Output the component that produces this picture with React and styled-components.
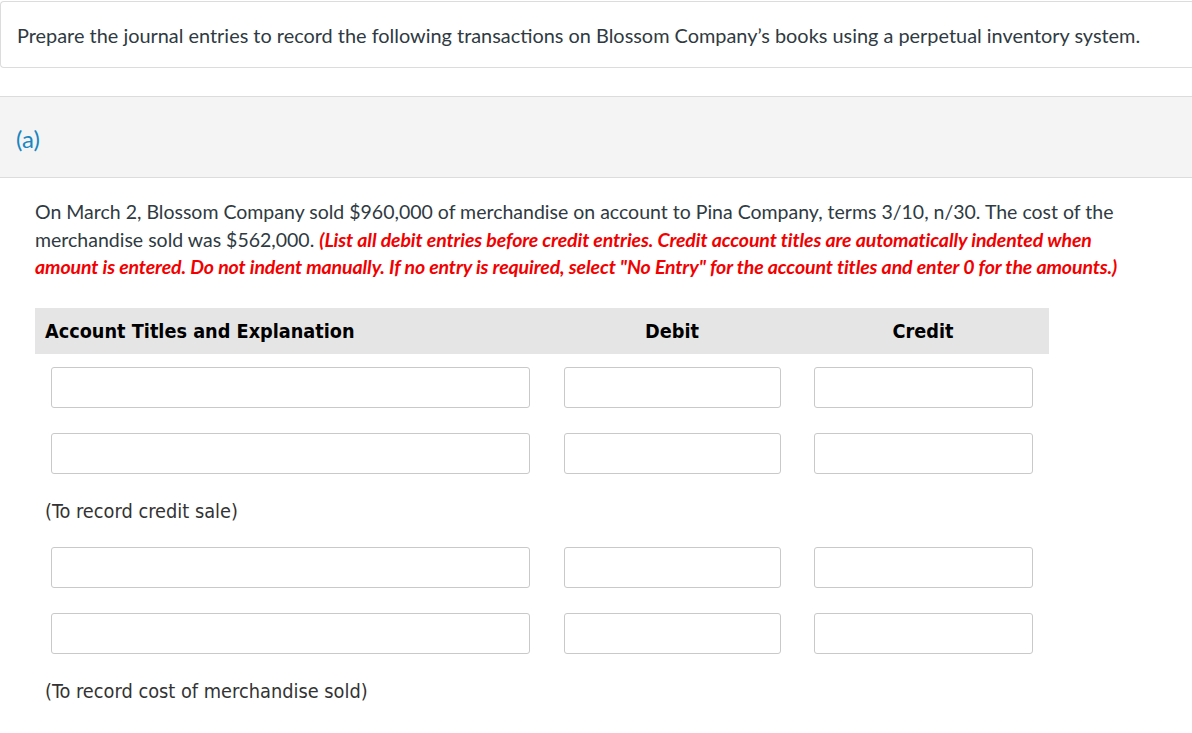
import React from "react";
import styled, { createGlobalStyle } from "styled-components";

const Global = createGlobalStyle`
  html, body { margin: 0; padding: 0; background: #fff; }
  body { font-family: Lato, "Open Sans", sans-serif; color: #333; }
  * { box-sizing: border-box; }
`;

const Page = styled.div`
  width: 1192px;
  padding-top: 1px;
`;

const IntroBox = styled.div`
  height: 67px;
  border: 1px solid #dcdcdc;
  border-right: none;
  border-radius: 4px 0 0 4px;
  display: flex;
  align-items: center;
  padding: 0 0 0 16px;
  font-size: 19.9px;
  color: #2f3a42;
  white-space: nowrap;
`;

const PartBand = styled.div`
  margin-top: 28px;
  height: 82px;
  background: #f4f4f4;
  border-top: 1px solid #dcdcdc;
  border-bottom: 1px solid #dcdcdc;
  display: flex;
  align-items: center;
  padding: 2px 0 0 16px;
  font-size: 24px;
  color: #1a86c0;
`;

const Question = styled.p`
  margin: 20px 0 0 35px;
  width: 1140px;
  font-size: 19.5px;
  line-height: 27.5px;
  color: #2f3a42;
  white-space: nowrap;
`;

const Warn = styled.span`
  color: #f20000;
  font-weight: 700;
  font-style: italic;
  letter-spacing: -0.1px;
`;

const Table = styled.div`
  margin: 27px 0 0 35px;
  width: 1014px;
  display: grid;
  grid-template-columns: 512px 250px 252px;
  font-family: "DejaVu Sans Condensed", "DejaVu Sans", sans-serif;
`;

const HeadCell = styled.div`
  height: 46px;
  background: #e5e5e5;
  display: flex;
  align-items: center;
  justify-content: ${(p) => (p.$center ? "center" : "flex-start")};
  padding-left: ${(p) => (p.$center ? "0" : "10px")};
  padding-top: 2px;
  font-weight: 700;
  font-size: 19.7px;
  color: #000;
`;

const InputCell = styled.div`
  height: 66px;
  display: flex;
  align-items: center;
  padding: 2px ${(p) => (p.$first ? "17px" : "16px")} 0 ${(p) => (p.$first ? "16px" : "17px")};
`;

const Field = styled.div`
  width: 100%;
  height: 41px;
  border: 1px solid #c9c9c9;
  border-radius: 3px;
  background: #fff;
`;

const Explain = styled.div`
  grid-column: 1 / -1;
  height: 48px;
  display: flex;
  align-items: center;
  padding: 4px 0 0 10px;
  font-size: 19.8px;
  color: #333;
`;

const Row = () => (
  <>
    <InputCell $first>
      <Field />
    </InputCell>
    <InputCell>
      <Field />
    </InputCell>
    <InputCell>
      <Field />
    </InputCell>
  </>
);

export default function App() {
  return (
    <Page>
      <Global />
      <IntroBox>
        Prepare the journal entries to record the following transactions on Blossom Company’s books using a perpetual inventory system.
      </IntroBox>
      <PartBand>(a)</PartBand>
      <Question>
        On March 2, Blossom Company sold $960,000 of merchandise on account to Pina Company, terms 3/10, n/30. The cost of the
        <br />
        merchandise sold was $562,000.{" "}
        <Warn>
          (List all debit entries before credit entries. Credit account titles are automatically indented when
          <br />
          amount is entered. Do not indent manually. If no entry is required, select "No Entry" for the account titles and enter 0 for the amounts.)
        </Warn>
      </Question>
      <Table>
        <HeadCell>Account Titles and Explanation</HeadCell>
        <HeadCell $center>Debit</HeadCell>
        <HeadCell $center>Credit</HeadCell>
        <Row />
        <Row />
        <Explain>(To record credit sale)</Explain>
        <Row />
        <Row />
        <Explain>(To record cost of merchandise sold)</Explain>
      </Table>
    </Page>
  );
}
